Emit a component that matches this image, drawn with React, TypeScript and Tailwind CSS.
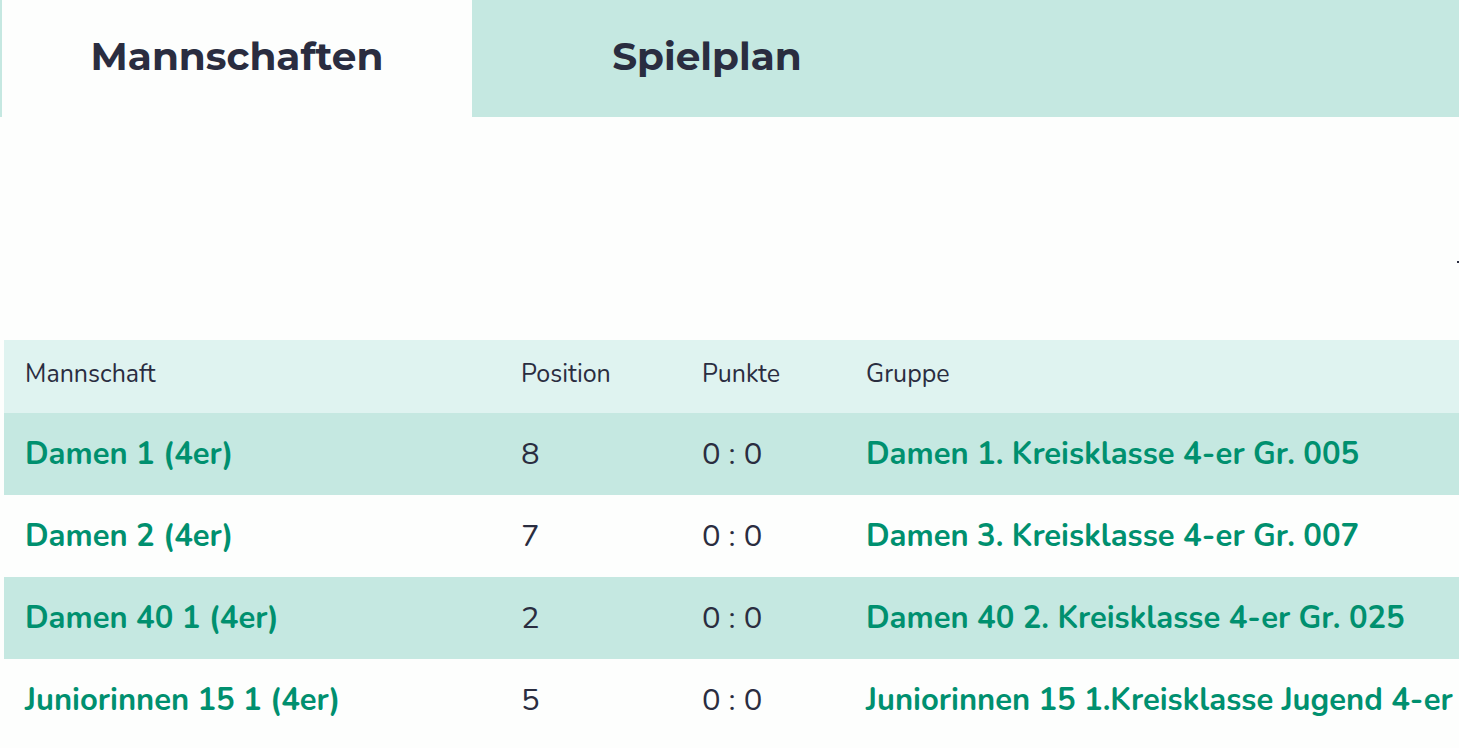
import React from 'react';

const rows = [
  { team: 'Damen 1 (4er)', pos: '8', pts: '0 : 0', group: 'Damen 1. Kreisklasse 4-er Gr. 005' },
  { team: 'Damen 2 (4er)', pos: '7', pts: '0 : 0', group: 'Damen 3. Kreisklasse 4-er Gr. 007' },
  { team: 'Damen 40 1 (4er)', pos: '2', pts: '0 : 0', group: 'Damen 40 2. Kreisklasse 4-er Gr. 025' },
  { team: 'Juniorinnen 15 1 (4er)', pos: '5', pts: '0 : 0', group: 'Juniorinnen 15 1.Kreisklasse Jugend 4-er Gr. 001' },
];

function App() {
  return (
    <div className="h-screen w-full overflow-hidden bg-[#fdfefd] relative">
      {/* Tabs */}
      <div className="flex h-[117px] bg-[#c5e8e1] pl-[2px]">
        <button className="w-[470px] h-full bg-[#fdfefd] text-[#2a2d40] text-[39px] font-bold font-['Montserrat','Noto_Sans',sans-serif] pb-[4px]">
          Mannschaften
        </button>
        <button className="w-[470px] h-full text-[#2a2d40] text-[39px] font-bold font-['Montserrat','Noto_Sans',sans-serif] pb-[4px]">
          Spielplan
        </button>
      </div>

      <div className="absolute right-0 top-[261px] w-[2px] h-[2px] bg-[#2a2d40]" />

      {/* Table */}
      <div className="mt-[223px] ml-[4px] w-[1455px] font-['Nunito','Lato',sans-serif]">
        <div className="flex items-center h-[73px] bg-[#dff3f0] text-[#2a2d40] text-[25px] pb-[3px]">
          <div className="w-[496px] pl-[21px]">Mannschaft</div>
          <div className="w-[181px] pl-[21px]">Position</div>
          <div className="w-[164px] pl-[21px]">Punkte</div>
          <div className="flex-1 pl-[21px]">Gruppe</div>
        </div>
        {rows.map((r, i) => (
          <div
            key={r.team}
            className={`flex items-start min-h-[82px] text-[31px] leading-[82px] ${i % 2 === 0 ? 'bg-[#c5e8e1]' : 'bg-[#fdfefd]'}`}
          >
            <div className="w-[496px] pl-[21px] font-bold text-[#00906f]">{r.team}</div>
            <div className="w-[181px] pl-[21px] text-[#2a2d40]">{r.pos}</div>
            <div className="w-[164px] pl-[21px] text-[#2a2d40]">{r.pts}</div>
            <div className="flex-1 min-w-0 pl-[21px] font-bold text-[#00906f]">{r.group}</div>
          </div>
        ))}
      </div>
    </div>
  );
}

export default App;
